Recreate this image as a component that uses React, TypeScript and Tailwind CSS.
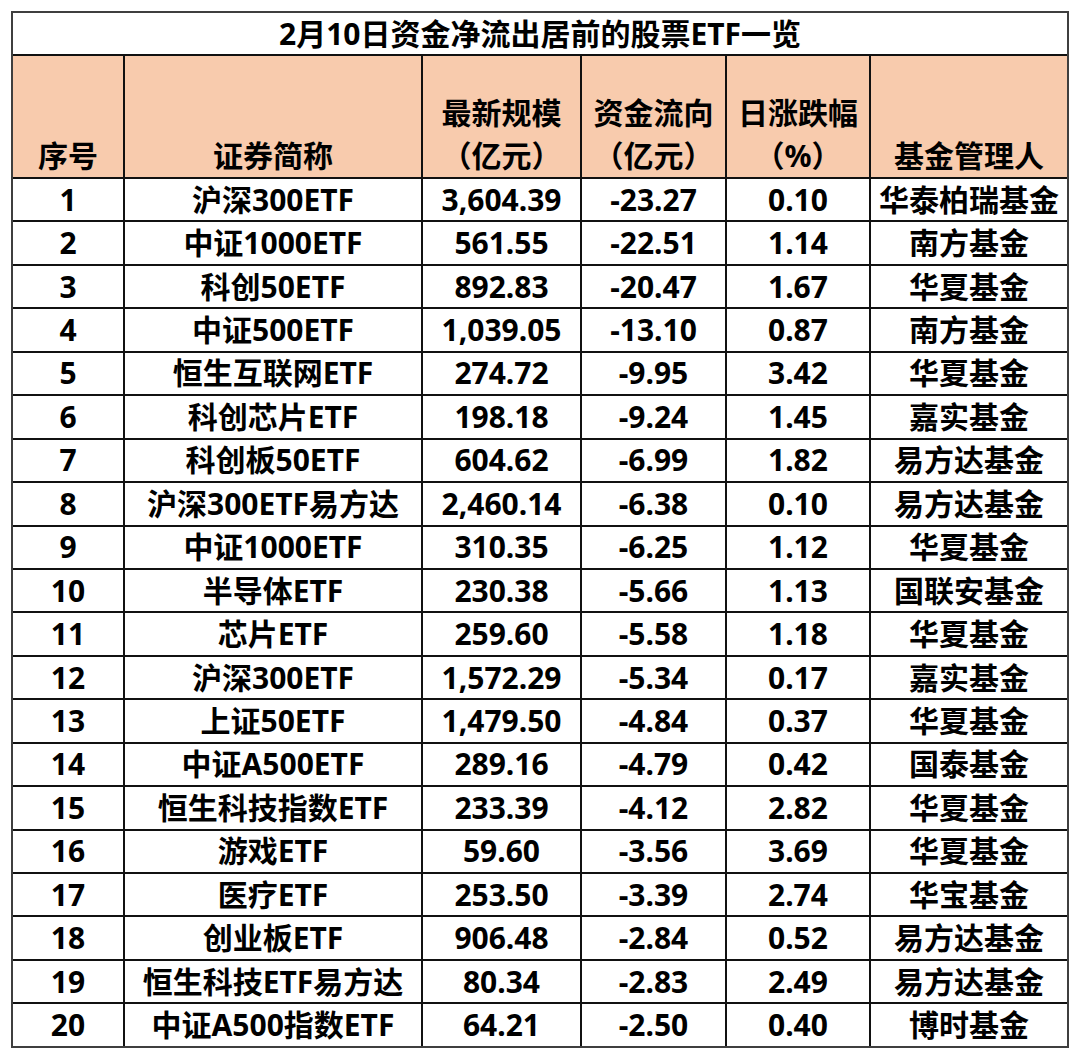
import React from "react";

const rows: [string, string, string, string, string, string][] = [
  ["1", "沪深300ETF", "3,604.39", "-23.27", "0.10", "华泰柏瑞基金"],
  ["2", "中证1000ETF", "561.55", "-22.51", "1.14", "南方基金"],
  ["3", "科创50ETF", "892.83", "-20.47", "1.67", "华夏基金"],
  ["4", "中证500ETF", "1,039.05", "-13.10", "0.87", "南方基金"],
  ["5", "恒生互联网ETF", "274.72", "-9.95", "3.42", "华夏基金"],
  ["6", "科创芯片ETF", "198.18", "-9.24", "1.45", "嘉实基金"],
  ["7", "科创板50ETF", "604.62", "-6.99", "1.82", "易方达基金"],
  ["8", "沪深300ETF易方达", "2,460.14", "-6.38", "0.10", "易方达基金"],
  ["9", "中证1000ETF", "310.35", "-6.25", "1.12", "华夏基金"],
  ["10", "半导体ETF", "230.38", "-5.66", "1.13", "国联安基金"],
  ["11", "芯片ETF", "259.60", "-5.58", "1.18", "华夏基金"],
  ["12", "沪深300ETF", "1,572.29", "-5.34", "0.17", "嘉实基金"],
  ["13", "上证50ETF", "1,479.50", "-4.84", "0.37", "华夏基金"],
  ["14", "中证A500ETF", "289.16", "-4.79", "0.42", "国泰基金"],
  ["15", "恒生科技指数ETF", "233.39", "-4.12", "2.82", "华夏基金"],
  ["16", "游戏ETF", "59.60", "-3.56", "3.69", "华夏基金"],
  ["17", "医疗ETF", "253.50", "-3.39", "2.74", "华宝基金"],
  ["18", "创业板ETF", "906.48", "-2.84", "0.52", "易方达基金"],
  ["19", "恒生科技ETF易方达", "80.34", "-2.83", "2.49", "易方达基金"],
  ["20", "中证A500指数ETF", "64.21", "-2.50", "0.40", "博时基金"],
];

const headers: string[][] = [
  ["序号"],
  ["证券简称"],
  ["最新规模", "（亿元）"],
  ["资金流向", "（亿元）"],
  ["日涨跌幅", "（%）"],
  ["基金管理人"],
];

export default function App() {
  return (
    <div
      className="w-[1080px] h-[1059px] bg-white pl-[11px] pt-[11px] text-black"
      style={{ fontFamily: '"Noto Sans", "Noto Sans CJK SC", sans-serif' }}
    >
      <div className="inline-block border-2 border-[#3f3f3f]">
        <div className="grid grid-cols-[110px_296px_157px_143px_142px_196px] grid-rows-[41px_121px_repeat(20,41.45px)] gap-[2px] bg-[#111]">
          <div className="col-span-6 bg-white flex items-center justify-center text-[30px] font-bold leading-none">
            2月10日资金净流出居前的股票ETF一览
          </div>
          {headers.map((h, i) => (
            <div
              key={i}
              className="bg-[#F8CBAD] flex flex-col items-center justify-end text-[30px] font-bold leading-[43px] whitespace-nowrap"
            >
              {h.map((l, j) => (
                <div key={j}>{l}</div>
              ))}
            </div>
          ))}
          {rows.map((r, i) =>
            r.map((c, j) => (
              <div
                key={`${i}-${j}`}
                className="bg-white flex items-center justify-center text-[30px] font-bold leading-none whitespace-nowrap"
              >
                {c}
              </div>
            ))
          )}
        </div>
      </div>
    </div>
  );
}
